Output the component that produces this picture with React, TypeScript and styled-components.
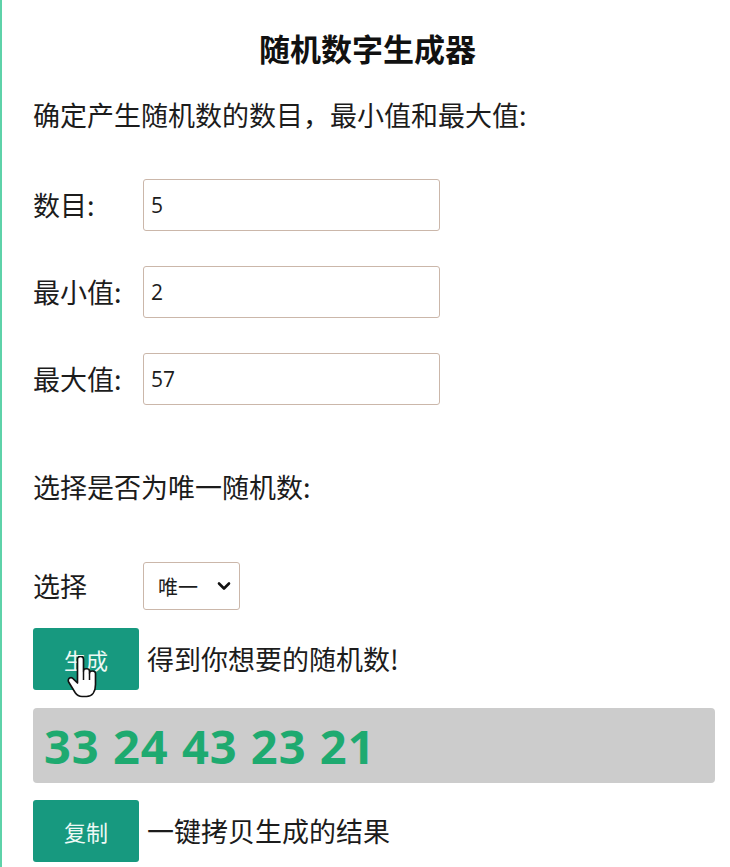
import styled, { createGlobalStyle } from 'styled-components';

const GlobalStyle = createGlobalStyle`
  html, body {
    margin: 0;
    padding: 0;
    background: #fff;
  }
  body {
    font-family: "Noto Sans CJK SC", "Open Sans", sans-serif;
    color: #1c1c1c;
    border-left: 2px solid #5ed2a9;
    min-height: 867px;
    box-sizing: border-box;
  }
`;

const Page = styled.div`
  display: flex;
  flex-direction: column;
  padding: 0 12px 0 31px;
`;

const Title = styled.h1`
  margin: 28px 0 0 -16px;
  font-size: 31px;
  line-height: 40px;
  font-weight: 700;
  text-align: center;
  color: #111;
`;

const Text = styled.p<{ $mt: number }>`
  margin: ${(p) => p.$mt}px 0 0;
  font-size: 27px;
  line-height: 40px;
`;

const Row = styled.div<{ $mt: number }>`
  display: flex;
  align-items: center;
  margin-top: ${(p) => p.$mt}px;
`;

const Label = styled.label`
  width: 110px;
  font-size: 27px;
  line-height: 40px;
  flex-shrink: 0;
`;

const Field = styled.input`
  box-sizing: border-box;
  width: 297px;
  height: 52px;
  padding: 0 7px;
  border: 1px solid #cbb7aa;
  border-radius: 3px;
  font-family: "Open Sans", "Noto Sans CJK SC", sans-serif;
  font-size: 21px;
  color: #1c1c1c;
  outline: none;
`;

const SelectBox = styled.div`
  position: relative;
  width: 97px;
  height: 48px;
`;

const Select = styled.select`
  box-sizing: border-box;
  appearance: none;
  width: 100%;
  height: 100%;
  padding: 0 0 0 14px;
  border: 1px solid #cbb7aa;
  border-radius: 3px;
  background: #fff;
  font-family: "Noto Sans CJK SC", sans-serif;
  font-size: 20px;
  color: #1c1c1c;
  outline: none;
`;

const Chevron = styled.svg`
  position: absolute;
  right: 9px;
  top: 19px;
  pointer-events: none;
`;

const Button = styled.button`
  position: relative;
  width: 106px;
  height: 62px;
  flex-shrink: 0;
  border: none;
  border-radius: 3px;
  background: #17997f;
  color: #eef9f5;
  font-family: "Noto Sans CJK SC", sans-serif;
  font-size: 22px;
  cursor: pointer;
`;

const Hint = styled.span`
  margin-left: 8px;
  font-size: 27px;
  line-height: 40px;
`;

const Result = styled.div`
  box-sizing: border-box;
  width: 682px;
  height: 75px;
  margin-top: 18px;
  padding: 0 11px;
  display: flex;
  align-items: center;
  border-radius: 4px;
  background: #cccccc;
  color: #1eaa70;
  font-family: "Open Sans", sans-serif;
  font-size: 47px;
  font-weight: 700;
  letter-spacing: 1px;
`;

const Cursor = styled.svg`
  position: absolute;
  left: 34px;
  top: 28px;
  pointer-events: none;
`;

function HandCursor() {
  return (
    <Cursor width="30" height="42" viewBox="0 0 20 28">
      <path
        d="M7 2 C7 0.9 8 0.2 9 0.2 C10 0.2 11 0.9 11 2 V10 C11 9 12 8.5 13 8.5 C14 8.5 15 9 15 10 V11.5 C15 10.5 16 10 17 10 C18 10 19 10.7 19 11.7 V19 C19 23.5 17 27 13 27 H10 C8 27 6.5 26 5.5 24.5 L1.2 17.5 C0.6 16.5 0.8 15.2 1.7 14.7 C2.6 14.2 3.6 14.5 4.2 15.2 L7 18 Z"
        fill="#fff"
        stroke="#111"
        strokeWidth="1.1"
        strokeLinejoin="round"
      />
      <path d="M11 10 V16 M15 11.5 V16" stroke="#111" strokeWidth="1" />
    </Cursor>
  );
}

export default function App() {
  const numbers = [33, 24, 43, 23, 21];

  return (
    <>
      <GlobalStyle />
      <Page>
        <Title>随机数字生成器</Title>
        <Text $mt={27}>确定产生随机数的数目，最小值和最大值:</Text>

        <Row $mt={44}>
          <Label>数目:</Label>
          <Field defaultValue="5" />
        </Row>
        <Row $mt={35}>
          <Label>最小值:</Label>
          <Field defaultValue="2" />
        </Row>
        <Row $mt={35}>
          <Label>最大值:</Label>
          <Field defaultValue="57" />
        </Row>

        <Text $mt={62}>选择是否为唯一随机数:</Text>

        <Row $mt={55}>
          <Label>选择</Label>
          <SelectBox>
            <Select defaultValue="unique">
              <option value="unique">唯一</option>
              <option value="repeat">可重复</option>
            </Select>
            <Chevron width="14" height="10" viewBox="0 0 14 10">
              <path d="M2 2.5 L7 7.5 L12 2.5" fill="none" stroke="#111" strokeWidth="2.6" strokeLinecap="round" strokeLinejoin="round" />
            </Chevron>
          </SelectBox>
        </Row>

        <Row $mt={18}>
          <Button>
            生成
            <HandCursor />
          </Button>
          <Hint>得到你想要的随机数!</Hint>
        </Row>

        <Result>{numbers.join(' ')}</Result>

        <Row $mt={17}>
          <Button>复制</Button>
          <Hint>一键拷贝生成的结果</Hint>
        </Row>
      </Page>
    </>
  );
}
